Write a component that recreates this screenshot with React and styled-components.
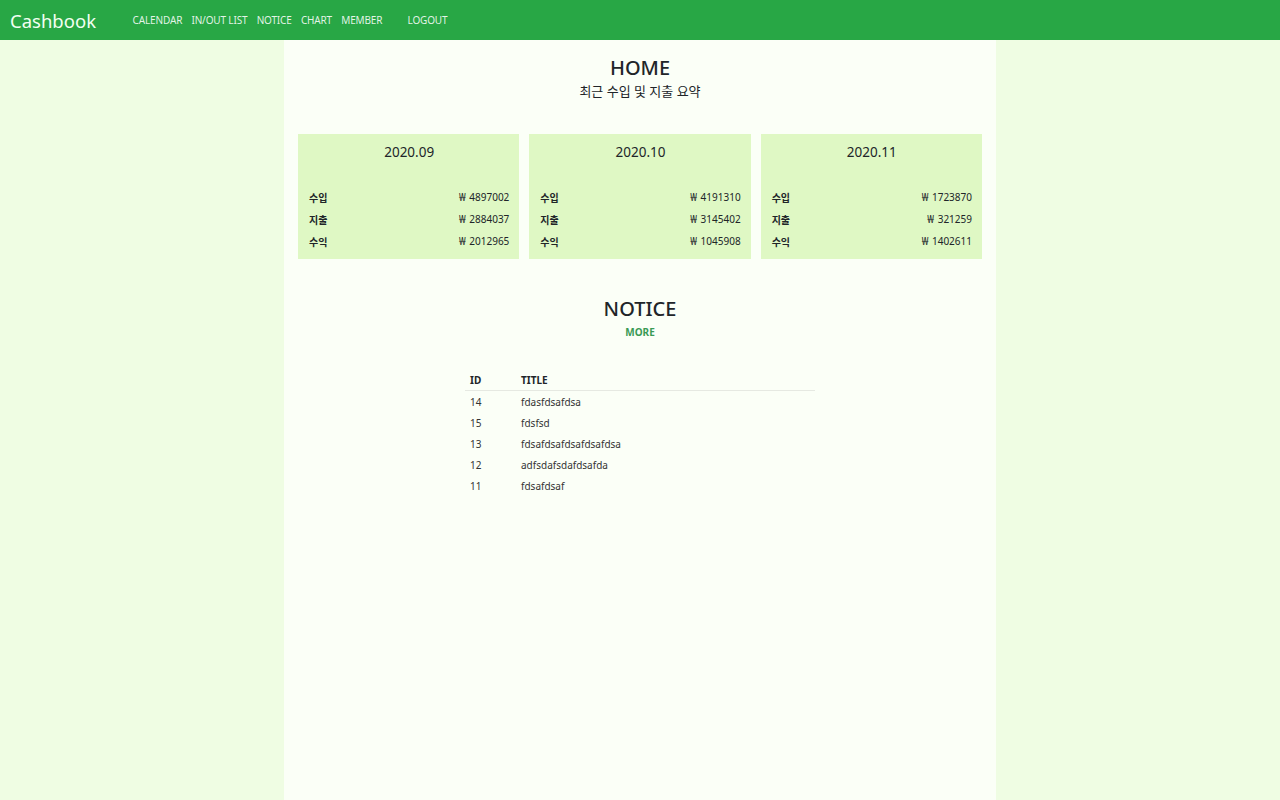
import React from 'react';
import styled, { createGlobalStyle } from 'styled-components';

const months = [
  { label: '2020.09', income: '4897002', spend: '2884037', profit: '2012965' },
  { label: '2020.10', income: '4191310', spend: '3145402', profit: '1045908' },
  { label: '2020.11', income: '1723870', spend: '321259', profit: '1402611' },
];

const notices = [
  { id: 14, title: 'fdasfdsafdsa' },
  { id: 15, title: 'fdsfsd' },
  { id: 13, title: 'fdsafdsafdsafdsafdsa' },
  { id: 12, title: 'adfsdafsdafdsafda' },
  { id: 11, title: 'fdsafdsaf' },
];

function App() {
  return (
    <>
      <GlobalStyle />
      <NavBar>
        <Brand>Cashbook</Brand>
        <NavLinks>
          <NavLink>CALENDAR</NavLink>
          <NavLink>IN/OUT LIST</NavLink>
          <NavLink>NOTICE</NavLink>
          <NavLink>CHART</NavLink>
          <NavLink>MEMBER</NavLink>
          <NavLink $spaced>LOGOUT</NavLink>
        </NavLinks>
      </NavBar>
      <Page>
        <Container>
          <Heading>HOME</Heading>
          <SubHeading>최근 수입 및 지출 요약</SubHeading>
          <CardGrid>
            {months.map((m) => (
              <Card key={m.label}>
                <CardTitle>{m.label}</CardTitle>
                <Row>
                  <RowLabel>수입</RowLabel>
                  <RowValue>₩ {m.income}</RowValue>
                </Row>
                <Row>
                  <RowLabel>지출</RowLabel>
                  <RowValue>₩ {m.spend}</RowValue>
                </Row>
                <Row>
                  <RowLabel>수익</RowLabel>
                  <RowValue>₩ {m.profit}</RowValue>
                </Row>
              </Card>
            ))}
          </CardGrid>
          <Heading $notice>NOTICE</Heading>
          <MoreLink href="#">MORE</MoreLink>
          <NoticeTable>
            <thead>
              <tr>
                <Th $id>ID</Th>
                <Th>TITLE</Th>
              </tr>
            </thead>
            <tbody>
              {notices.map((n) => (
                <tr key={n.id}>
                  <Td>{n.id}</Td>
                  <Td>{n.title}</Td>
                </tr>
              ))}
            </tbody>
          </NoticeTable>
        </Container>
      </Page>
    </>
  );
}

const GlobalStyle = createGlobalStyle`
  body {
    margin: 0;
    background: #effde3;
    font-family: "Noto Sans", "Noto Sans CJK KR", sans-serif;
    color: #212529;
  }
`;

const NavBar = styled.nav`
  height: 40px;
  background: #28a745;
  display: flex;
  align-items: center;
  padding: 0 10px;
`;

const Brand = styled.a`
  font-size: 18.5px;
  color: #f2fff2;
  margin-right: 32px;
`;

const NavLinks = styled.div`
  display: flex;
  align-items: center;
`;

const NavLink = styled.a`
  font-size: 10px;
  color: rgba(255, 255, 255, 0.88);
  padding: 0 4.6px;
  margin-left: ${(p) => (p.$spaced ? '16px' : '0')};
  letter-spacing: -0.15px;
`;

const Page = styled.main`
  display: flex;
  justify-content: center;
`;

const Container = styled.div`
  width: 712px;
  min-height: 760px;
  background: #fbfff7;
  padding: 14px 14px 0;
  box-sizing: border-box;
  display: flex;
  flex-direction: column;
  align-items: center;
`;

const Heading = styled.h3`
  margin: ${(p) => (p.$notice ? '36px 0 0' : '0')};
  font-size: 20px;
  font-weight: 500;
  line-height: 28px;
`;

const SubHeading = styled.p`
  margin: 0;
  font-size: 13px;
  line-height: 18px;
`;

const CardGrid = styled.div`
  width: 100%;
  display: grid;
  grid-template-columns: repeat(3, 1fr);
  gap: 10px;
  margin-top: 34px;
`;

const Card = styled.div`
  background: #dff8c4;
  height: 125px;
  padding: 9px 10px 0 11px;
  box-sizing: border-box;
`;

const CardTitle = styled.div`
  text-align: center;
  font-size: 13.5px;
  line-height: 18px;
  margin-bottom: 25px;
`;

const Row = styled.div`
  display: flex;
  justify-content: space-between;
  align-items: center;
  height: 22px;
`;

const RowLabel = styled.span`
  font-size: 10px;
  font-weight: 700;
`;

const RowValue = styled.span`
  font-size: 10px;
  word-spacing: 1px;
`;

const MoreLink = styled.a`
  font-size: 10px;
  font-weight: 700;
  color: #3a9a55;
  text-decoration: none;
  margin-top: 2px;
`;

const NoticeTable = styled.table`
  width: 350px;
  margin-top: 31px;
  border-collapse: collapse;
  font-size: 10px;
`;

const Th = styled.th`
  text-align: left;
  font-weight: 700;
  padding: 3px 5px;
  width: ${(p) => (p.$id ? '41px' : 'auto')};
  border-bottom: 1px solid #e6e9e2;
`;

const Td = styled.td`
  padding: 3px 5px;
  height: 15px;
  color: #333;
`;

export default App;
